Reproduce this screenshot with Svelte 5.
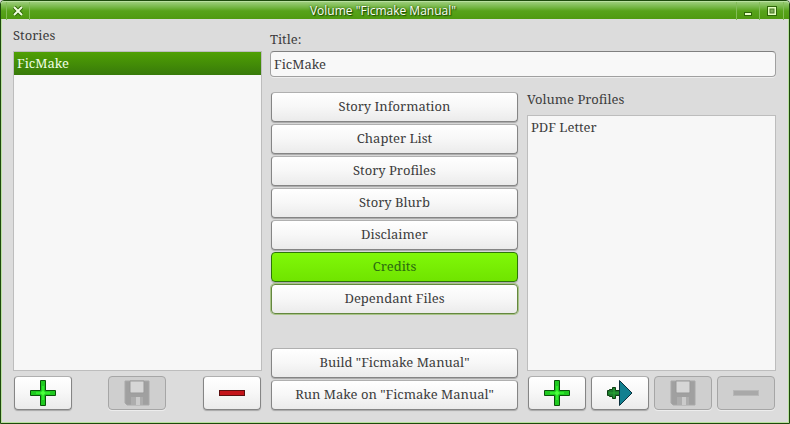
<script>
  let title = 'FicMake';
  let stories = ['FicMake'];
  let profiles = ['PDF Letter'];
  let selectedStory = 'FicMake';
  let selectedProfile = '';

  const actions = [
    { label: 'Story Information' },
    { label: 'Chapter List' },
    { label: 'Story Profiles' },
    { label: 'Story Blurb' },
    { label: 'Disclaimer' },
    { label: 'Credits', state: 'hot' },
    { label: 'Dependant Files', state: 'focused' },
  ];
</script>

{#snippet plus()}
  <svg width="26" height="26" viewBox="0 0 26 26" aria-hidden="true">
    <path d="M10.5 0.5h5v10h10v5h-10v10h-5v-10h-10v-5h10z" fill="#1fc91f" stroke="#0a520a" />
    <path d="M13 6v14M6 13h14" stroke="#2eea2a" stroke-width="2" />
    <circle cx="13" cy="13" r="2" fill="#4cff3c" />
  </svg>
{/snippet}

{#snippet minus(off)}
  <svg width="26" height="26" viewBox="0 0 26 26" aria-hidden="true">
    <rect x="0.5" y="10.5" width="25" height="5" fill={off ? '#a9a9a9' : '#c4141a'} stroke={off ? '#b8b8b8' : '#5c1010'} />
  </svg>
{/snippet}

{#snippet disk()}
  <svg width="26" height="26" viewBox="0 0 26 26" aria-hidden="true">
    <path d="M1 1h24v24H3l-2-2z" fill="#a0a0a0" stroke="#a9a9a9" />
    <path d="M6 1h14v11q0 1-1 1H7q-1 0-1-1z" fill="#d6d6d6" stroke="#999" />
    <rect x="7" y="17" width="12" height="8" fill="#adadad" />
    <rect x="12" y="17" width="4" height="8" fill="#cbcbcb" />
  </svg>
{/snippet}

<div class="window">
  <header>
    <button class="wm" aria-label="Close">
      <svg width="10" height="10" viewBox="0 0 10 10">
        <path d="M1 1l8 8M9 1L1 9" stroke="#2f6608" stroke-width="4" />
        <path d="M1 1l8 8M9 1L1 9" stroke="#f2ffe0" stroke-width="2" />
      </svg>
    </button>
    <h1>Volume "Ficmake Manual"</h1>
    <div class="wm-group">
      <button class="wm" aria-label="Minimize">
        <svg width="10" height="10" viewBox="0 0 10 10">
          <rect x="1.5" y="6.5" width="7" height="3" fill="#eaffc8" stroke="#2f6608" />
        </svg>
      </button>
      <button class="wm" aria-label="Maximize">
        <svg width="10" height="10" viewBox="0 0 10 10">
          <rect x="0.5" y="0.5" width="9" height="9" fill="#e4ffc0" stroke="#2f6608" />
          <rect x="3" y="3" width="4" height="4" fill="#7fae58" stroke="#4b7a28" />
        </svg>
      </button>
    </div>
  </header>

  <main>
    <section class="stories">
      <h2 id="stories-label">Stories</h2>
      <ul class="list" role="listbox" aria-labelledby="stories-label">
        {#each stories as story}
          <li role="option" aria-selected={story === selectedStory} class:selected={story === selectedStory}>{story}</li>
        {/each}
      </ul>
      <div class="tools">
        <button class="tool" aria-label="Add story">{@render plus()}</button>
        <button class="tool" aria-label="Save story" disabled>{@render disk()}</button>
        <button class="tool" aria-label="Remove story">{@render minus(false)}</button>
      </div>
    </section>

    <div class="editor">
      <label for="title">Title:</label>
      <input id="title" type="text" bind:value={title} />

      <div class="columns">
        <div class="actions">
          {#each actions as action}
            <button class={action.state}>{action.label}</button>
          {/each}
          <button class="build">Build "Ficmake Manual"</button>
          <button>Run Make on "Ficmake Manual"</button>
        </div>

        <section class="profiles">
          <h2 id="profiles-label">Volume Profiles</h2>
          <ul class="list" role="listbox" aria-labelledby="profiles-label">
            {#each profiles as profile}
              <li role="option" aria-selected={profile === selectedProfile}>{profile}</li>
            {/each}
          </ul>
          <div class="tools">
            <button class="tool" aria-label="Add profile">{@render plus()}</button>
            <button class="tool" aria-label="Import profile">
              <svg width="26" height="26" viewBox="0 0 26 26" aria-hidden="true">
                <path d="M5.5 7.5h3v3h5v5h-5v3h-3v-2h-3v-1h-2v-5h2v-1h3z" fill="#1b7a2c" stroke="#0c4012" />
                <path d="M7 8.5v9M2 13h11" stroke="#2ba836" />
                <path d="M12.5 0.5L25 13 12.5 25.5z" fill="#128090" stroke="#0b2f3c" />
              </svg>
            </button>
            <button class="tool" aria-label="Save profile" disabled>{@render disk()}</button>
            <button class="tool" aria-label="Remove profile" disabled>{@render minus(true)}</button>
          </div>
        </section>
      </div>
    </div>
  </main>
</div>

<style>
  :global(body) {
    margin: 0;
    background: #dcdcdc;
  }

  .window {
    box-sizing: border-box;
    min-height: 100vh;
    display: flex;
    flex-direction: column;
    border: 1px solid #1d4a0c;
    border-radius: 4px 4px 0 0;
    box-shadow: inset 0 -1px #b9e09f, inset 0 0 0 1px #b9e09f;
    background: #dcdcdc;
    color: #3c3c3c;
    font-family: 'Droid Serif', 'Noto Serif', 'DejaVu Serif', serif;
    font-size: 13px;
    line-height: 16px;
  }

  header {
    display: grid;
    grid-template-columns: auto 1fr auto;
    align-items: center;
    height: 18px;
    padding: 0 5px;
    border-radius: 3px 3px 0 0;
    background: linear-gradient(#a3d184, #74b644 35%, #57a31a 55%, #4f9a10);
    box-shadow: inset 0 1px #b9e09f;
  }

  h1 {
    margin: 0;
    color: #fbfff5;
    font: 500 12px/20px 'Open Sans', sans-serif;
    text-align: center;
    text-shadow: 0 0 2px #1f4d05, 1px 1px 1px #1f4d05;
  }

  .wm {
    display: flex;
    align-items: center;
    justify-content: center;
    width: 24px;
    height: 18px;
    padding: 0;
    border: solid #83bd58;
    border-width: 0 1px;
    background: none;
  }

  .wm-group {
    display: flex;
  }

  .wm + .wm {
    border-left: 0;
  }

  main {
    flex: 1;
    display: grid;
    grid-template-columns: calc((100% - 16px) / 3) 1fr;
    gap: 8px;
    padding: 8px 13px 13px 12px;
  }

  section,
  .editor,
  .actions {
    display: flex;
    flex-direction: column;
  }

  h2 {
    margin: 0;
    font: inherit;
  }

  .stories h2 {
    margin-bottom: 8px;
  }

  .list {
    flex: 1;
    margin: 0;
    padding: 0;
    border: 1px solid #bdbdbd;
    background: #f7f7f7;
    list-style: none;
  }

  .list li {
    padding: 4px 3px;
    line-height: 15px;
  }

  .list .selected {
    background: linear-gradient(#4fa004, #387a0a);
    color: #f0ffe4;
  }

  .tools {
    display: flex;
    justify-content: space-between;
    margin-top: 5px;
    padding: 0 1px;
  }

  button {
    box-sizing: border-box;
    height: 30px;
    padding: 0 0 2px;
    border: 1px solid #858585;
    border-top-color: #b0b0b0;
    border-radius: 4px;
    background: linear-gradient(#fff, #f7f7f7 50%, #ebebeb);
    box-shadow: 0 1px 1px #a8a8a8;
    color: inherit;
    font: inherit;
  }

  header button {
    border-radius: 0;
    box-shadow: none;
  }

  .tool {
    display: flex;
    align-items: center;
    justify-content: center;
    width: 58px;
    height: 34px;
    padding: 0;
  }

  .tool:disabled {
    border-color: #a6a6a6;
    background: #cfcfcf;
    box-shadow: 0 1px #ededed;
  }

  .editor {
    padding-top: 4px;
  }

  input {
    box-sizing: border-box;
    width: 100%;
    height: 26px;
    margin: 4px 0 0;
    padding: 0 3px;
    border: 1px solid #a0a0a0;
    border-top-color: #808080;
    border-radius: 4px;
    background: #f8f8f8;
    box-shadow: 0 1px #eee;
    color: inherit;
    font: inherit;
  }

  .columns {
    flex: 1;
    display: grid;
    grid-template-columns: 1fr 1fr;
    gap: 8px;
    margin-top: 14px;
  }

  .actions {
    gap: 2px;
    padding: 1px 1px 0;
  }

  .actions .hot {
    border-color: #2d7508;
    background: linear-gradient(#80f808, #70e400);
    color: #2b6a10;
  }

  .actions .focused {
    border-color: #64873f;
    box-shadow: 0 0 0 1px #a9c488;
  }

  .build {
    margin-top: auto;
  }

  .profiles h2 {
    margin-bottom: 8px;
  }
</style>
